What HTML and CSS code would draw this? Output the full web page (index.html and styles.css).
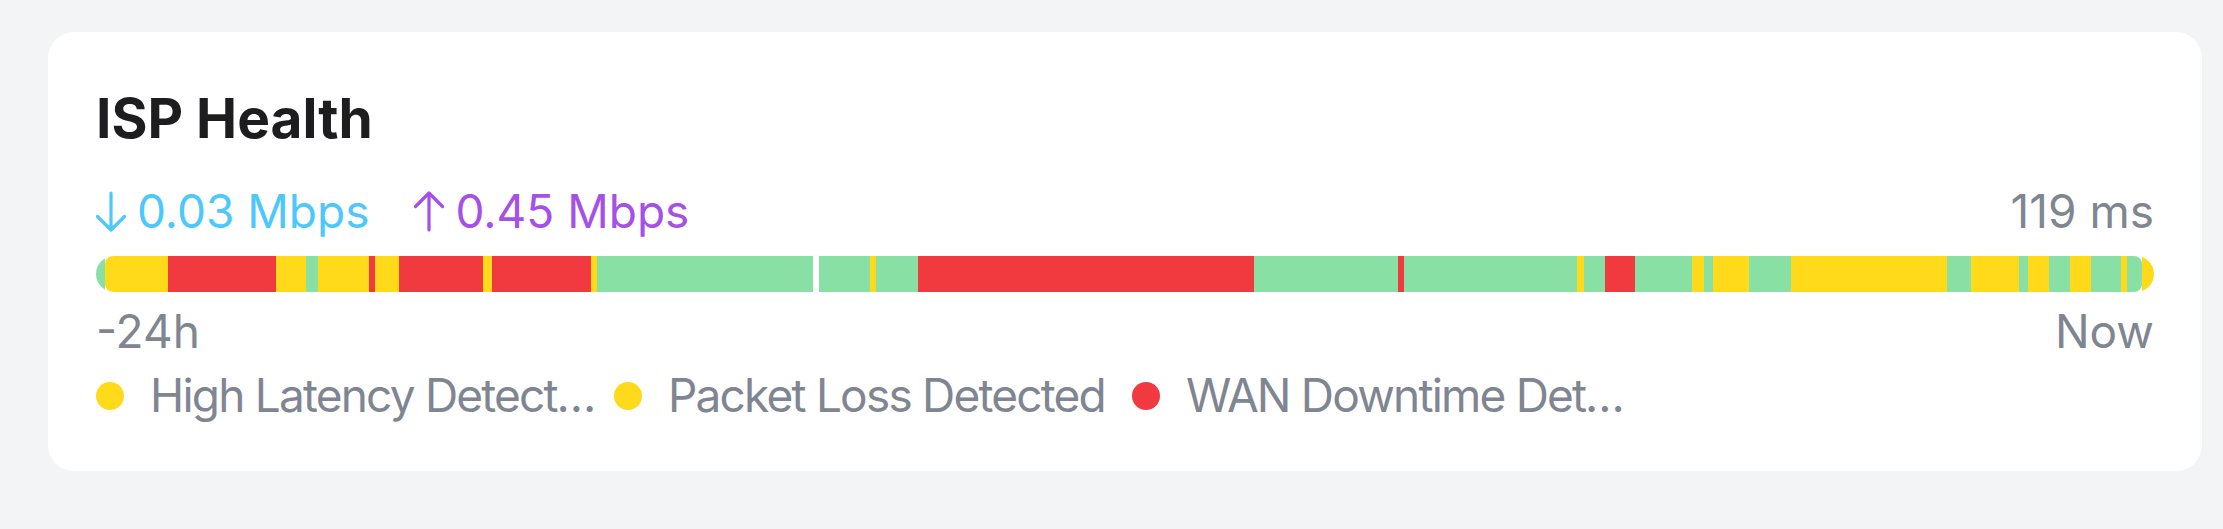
FILE: index.html
```html
<!DOCTYPE html>
<html lang="en">
<head>
  <meta charset="UTF-8" />
  <title>ISP Health</title>
  <link rel="stylesheet" href="styles.css">
</head>
<body>
  <div class="card">
    <h2 class="card-title">ISP Health</h2>

    <div class="stats">
      <span class="stat stat-down">
        <svg width="30" height="41" viewBox="0 0 30 41"><path d="M15 2V39M1.5 25.5L15 39L28.5 25.5" /></svg>
        0.03 Mbps
      </span>
      <span class="stat stat-up">
        <svg width="30" height="41" viewBox="0 0 30 41"><path d="M15 39V2M1.5 15.5L15 2L28.5 15.5" /></svg>
        0.45 Mbps
      </span>
      <span class="stat-latency">119 ms</span>
    </div>

    <!-- last 24h, weights are bucket lengths -->
    <div class="timeline">
      <div class="seg ok" style="flex-grow:9"></div>
      <div class="seg warn cap-left" style="flex-grow:63"></div>
      <div class="seg down" style="flex-grow:108"></div>
      <div class="seg warn" style="flex-grow:30"></div>
      <div class="seg ok" style="flex-grow:12"></div>
      <div class="seg warn" style="flex-grow:51"></div>
      <div class="seg down" style="flex-grow:6"></div>
      <div class="seg warn" style="flex-grow:24"></div>
      <div class="seg down" style="flex-grow:84"></div>
      <div class="seg warn" style="flex-grow:9"></div>
      <div class="seg down" style="flex-grow:99"></div>
      <div class="seg warn" style="flex-grow:6"></div>
      <div class="seg ok" style="flex-grow:216"></div>
      <div class="seg" style="flex-grow:6"></div>
      <div class="seg ok" style="flex-grow:51"></div>
      <div class="seg warn" style="flex-grow:6"></div>
      <div class="seg ok" style="flex-grow:42"></div>
      <div class="seg down" style="flex-grow:336"></div>
      <div class="seg ok" style="flex-grow:144"></div>
      <div class="seg down" style="flex-grow:6"></div>
      <div class="seg ok" style="flex-grow:173"></div>
      <div class="seg warn" style="flex-grow:7"></div>
      <div class="seg ok" style="flex-grow:21"></div>
      <div class="seg down" style="flex-grow:30"></div>
      <div class="seg ok" style="flex-grow:57"></div>
      <div class="seg warn" style="flex-grow:12"></div>
      <div class="seg ok" style="flex-grow:9"></div>
      <div class="seg warn" style="flex-grow:36"></div>
      <div class="seg ok" style="flex-grow:42"></div>
      <div class="seg warn" style="flex-grow:156"></div>
      <div class="seg ok" style="flex-grow:24"></div>
      <div class="seg warn" style="flex-grow:48"></div>
      <div class="seg ok" style="flex-grow:9"></div>
      <div class="seg warn" style="flex-grow:21"></div>
      <div class="seg ok" style="flex-grow:21"></div>
      <div class="seg warn" style="flex-grow:21"></div>
      <div class="seg ok" style="flex-grow:30"></div>
      <div class="seg warn" style="flex-grow:6"></div>
      <div class="seg ok cap-right" style="flex-grow:15"></div>
      <div class="seg warn" style="flex-grow:12"></div>
    </div>

    <div class="axis">
      <span>-24h</span>
      <span>Now</span>
    </div>

    <div class="legend">
      <div class="legend-item">
        <span class="dot warn"></span>
        <span class="legend-label">High Latency Detected</span>
      </div>
      <div class="legend-item">
        <span class="dot warn"></span>
        <span class="legend-label">Packet Loss Detected</span>
      </div>
      <div class="legend-item">
        <span class="dot down"></span>
        <span class="legend-label">WAN Downtime Detected</span>
      </div>
    </div>
  </div>
</body>
</html>
```

FILE: styles.css
```css
body {
  margin: 0;
  padding: 32px 21px 57px 48px;
  background: #f3f4f6;
  font-family: 'Inter', 'Noto Sans', sans-serif;
  color: #808691;
}

.card {
  background: #fff;
  border-radius: 26px;
  padding: 48px;
}

.card-title {
  margin: 0 0 28px;
  font-size: 55px;
  line-height: 76px;
  font-weight: 700;
  color: #1d1d1f;
}

.stats {
  display: flex;
  align-items: center;
  font-size: 46px;
  line-height: 55px;
  margin-bottom: 17px;
}

.stat {
  display: flex;
  align-items: center;
  gap: 11px;
  margin-right: 45px;
}

.stat svg path {
  fill: none;
  stroke: currentColor;
  stroke-width: 3.2;
  stroke-linecap: round;
  stroke-linejoin: round;
}

.stat-down {
  color: #4cc8fc;
}

.stat-up {
  color: #a550e6;
}

.stat-latency {
  margin-left: auto;
}

.timeline {
  display: flex;
  height: 36px;
  border-radius: 18px;
  overflow: hidden;
}

.seg {
  flex-basis: 0;
}

.ok {
  background: #88e0a4;
}

.warn {
  background: #ffda1a;
}

.down {
  background: #f13a3f;
}

.cap-left {
  border-radius: 8px 0 0 8px;
}

.cap-right {
  border-radius: 0 8px 8px 0;
}

.axis {
  display: flex;
  justify-content: space-between;
  margin-top: 12px;
  font-size: 46px;
  line-height: 55px;
}

.legend {
  display: grid;
  grid-template-columns: repeat(4, 1fr);
  column-gap: 14px;
  margin-top: 9px;
  font-size: 46px;
  line-height: 55px;
}

.legend-item {
  display: flex;
  align-items: center;
  gap: 26px;
  min-width: 0;
}

.dot {
  flex: none;
  width: 28px;
  height: 28px;
  border-radius: 50%;
}

.legend-label {
  overflow: hidden;
  white-space: nowrap;
  text-overflow: ellipsis;
  letter-spacing: -1.8px;
}
```
